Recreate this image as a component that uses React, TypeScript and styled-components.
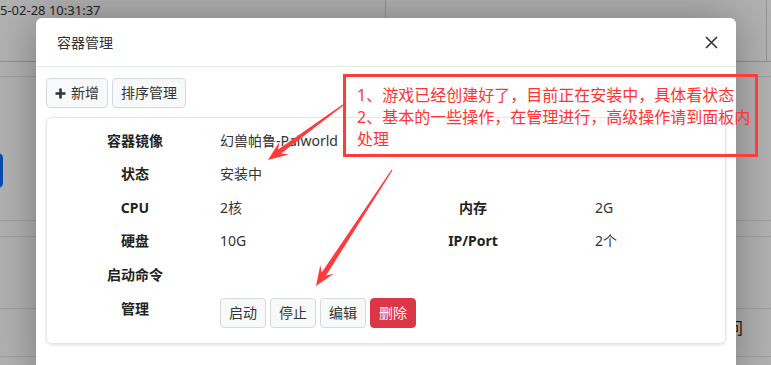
import React from 'react';
import styled, { createGlobalStyle } from 'styled-components';

const GlobalStyle = createGlobalStyle`
  html, body {
    margin: 0;
    padding: 0;
    background: #fff;
  }
  body {
    font-family: "Noto Sans", "Noto Sans CJK SC", sans-serif;
  }
`;

const Screen = styled.div`
  position: relative;
  width: 771px;
  height: 365px;
  overflow: hidden;
  background: #fff;
`;

/* page behind the dialog */

const PageTop = styled.div`
  display: flex;
  height: 62px;
  box-sizing: border-box;
  border-bottom: 1px solid #cfcfcf;
`;

const TopCell = styled.div<{ $w: number }>`
  width: ${p => p.$w}px;
  box-sizing: border-box;
  border-right: 1px solid #d4d4d4;
  white-space: nowrap;
  font-size: 13px;
  line-height: 20px;
  color: #333;
`;

const Band = styled.div<{ $h: number; $line: string }>`
  height: ${p => p.$h}px;
  box-sizing: border-box;
  border-bottom: 1px solid ${p => p.$line};
  overflow: hidden;
`;

const BlueBtn = styled.div`
  width: 63px;
  height: 35px;
  margin: 76px 0 0 -60px;
  border-radius: 5px;
  background: #0d6efd;
`;

const EdgeGlyph = styled.div`
  padding: 6px 0 0 727px;
  font-size: 16px;
  color: #222;
`;

const Backdrop = styled.div`
  position: absolute;
  inset: 0;
  background: rgba(0, 0, 0, 0.3);
`;

/* dialog */

const Modal = styled.div`
  position: absolute;
  left: 36px;
  top: 18px;
  width: 700px;
  background: #fff;
  border-radius: 6px 6px 0 0;
  box-shadow: 0 0 45px rgba(0, 0, 0, 0.32);
  color: #212529;
`;

const Header = styled.div`
  display: flex;
  align-items: center;
  justify-content: space-between;
  height: 49px;
  box-sizing: border-box;
  padding: 0 18px 0 21px;
  border-bottom: 1px solid #e9ecef;
`;

const Title = styled.div`
  font-size: 14px;
  color: #333;
`;

const Body = styled.div`
  padding: 11px 10px 40px;
`;

const Toolbar = styled.div`
  display: flex;
  gap: 4px;
`;

const Btn = styled.button<{ $danger?: boolean }>`
  display: inline-flex;
  align-items: center;
  gap: 5px;
  height: 30px;
  padding: 0 8px;
  border-radius: 4px;
  border: 1px solid ${p => (p.$danger ? '#dc3545' : '#d6d9dc')};
  background: ${p => (p.$danger ? '#dc3545' : '#f8f9fa')};
  color: ${p => (p.$danger ? '#fff' : '#333')};
  font-family: inherit;
  font-size: 14px;
  line-height: 1;
  cursor: pointer;
`;

const Card = styled.div`
  margin-top: 9px;
  padding: 6px 0 15px 10px;
  border: 1px solid #e6e6e6;
  border-radius: 6px;
  box-shadow: 0 1px 3px rgba(0, 0, 0, 0.12);
`;

const Row = styled.div<{ $top?: boolean }>`
  display: grid;
  grid-template-columns: 156px 145px 230px 1fr;
  align-items: ${p => (p.$top ? 'start' : 'center')};
  height: ${p => (p.$top ? 'auto' : '33.5px')};
  padding-top: ${p => (p.$top ? '6.5px' : '0')};
  line-height: 20px;
  font-size: 14px;
`;

const Label = styled.div<{ $top?: boolean }>`
  text-align: center;
  font-weight: 700;
  color: #222;
  padding-top: ${p => (p.$top ? '1px' : '0')};
`;

const Value = styled.div<{ $span?: boolean }>`
  padding-left: 7px;
  color: #333;
  white-space: nowrap;
  ${p => (p.$span ? 'grid-column: 2 / -1;' : '')}
`;

const Actions = styled.div`
  grid-column: 2 / -1;
  display: flex;
  gap: 4px;
  padding-left: 7px;
`;

/* screenshot annotation */

const Note = styled.div`
  position: absolute;
  left: 343px;
  top: 74px;
  width: 415px;
  height: 83px;
  box-sizing: border-box;
  border: 3px solid #ff3b3b;
  padding: 7px 0 0 11px;
  color: #ff3333;
  font-size: 16px;
  line-height: 22px;
`;

const ArrowLayer = styled.svg`
  position: absolute;
  left: 0;
  top: 0;
  pointer-events: none;
`;

const PlusIcon = () => (
  <svg width="11" height="11" viewBox="0 0 11 11">
    <path d="M5.5 0.5v10M0.5 5.5h10" stroke="#333" strokeWidth="2.6" />
  </svg>
);

const CloseIcon = () => (
  <svg width="13" height="13" viewBox="0 0 13 13">
    <path d="M1 1l11 11M12 1L1 12" stroke="#333" strokeWidth="1.6" />
  </svg>
);

const arrowPoints = (tx: number, ty: number, px: number, py: number) => {
  const len = Math.hypot(px - tx, py - ty);
  const ux = (px - tx) / len;
  const uy = (py - ty) / len;
  const nx = -uy;
  const ny = ux;
  const head = 20;
  const wing = 8;
  const neck = 2.6;
  const tail = 0.6;
  const bx = px - ux * head;
  const by = py - uy * head;
  const kx = px - ux * head * 0.72;
  const ky = py - uy * head * 0.72;
  return [
    [tx + nx * tail, ty + ny * tail],
    [kx + nx * neck, ky + ny * neck],
    [bx + nx * wing, by + ny * wing],
    [px, py],
    [bx - nx * wing, by - ny * wing],
    [kx - nx * neck, ky - ny * neck],
    [tx - nx * tail, ty - ny * tail],
  ]
    .map(([x, y]) => `${x.toFixed(1)},${y.toFixed(1)}`)
    .join(' ');
};

const info = [
  { label: 'CPU', value: '2核', label2: '内存', value2: '2G' },
  { label: '硬盘', value: '10G', label2: 'IP/Port', value2: '2个' },
];

export default function App() {
  return (
    <Screen>
      <GlobalStyle />

      <PageTop>
        <TopCell $w={386}>5-02-28 10:31:37</TopCell>
        <TopCell $w={381} />
      </PageTop>
      <Band $h={15} $line="#e2e2e2" />
      <Band $h={144} $line="#e2e2e2">
        <BlueBtn />
      </Band>
      <Band $h={16} $line="#e2e2e2" />
      <Band $h={72} $line="#e2e2e2" />
      <Band $h={48} $line="#e2e2e2">
        <EdgeGlyph>问</EdgeGlyph>
      </Band>

      <Backdrop />

      <Modal>
        <Header>
          <Title>容器管理</Title>
          <CloseIcon />
        </Header>
        <Body>
          <Toolbar>
            <Btn>
              <PlusIcon />
              新增
            </Btn>
            <Btn>排序管理</Btn>
          </Toolbar>
          <Card>
            <Row>
              <Label>容器镜像</Label>
              <Value $span>幻兽帕鲁-Palworld</Value>
            </Row>
            <Row>
              <Label>状态</Label>
              <Value $span>安装中</Value>
            </Row>
            {info.map(r => (
              <Row key={r.label}>
                <Label>{r.label}</Label>
                <Value>{r.value}</Value>
                <Label>{r.label2}</Label>
                <Value>{r.value2}</Value>
              </Row>
            ))}
            <Row>
              <Label>启动命令</Label>
              <Value $span />
            </Row>
            <Row $top>
              <Label $top>管理</Label>
              <Actions>
                <Btn>启动</Btn>
                <Btn>停止</Btn>
                <Btn>编辑</Btn>
                <Btn $danger>删除</Btn>
              </Actions>
            </Row>
          </Card>
        </Body>
      </Modal>

      <Note>
        <div>1、游戏已经创建好了，目前正在安装中，具体看状态</div>
        <div>2、基本的一些操作，在管理进行，高级操作请到面板内处理</div>
      </Note>

      <ArrowLayer width="771" height="365" viewBox="0 0 771 365">
        <polygon points={arrowPoints(343, 105, 268, 160)} fill="#ff3b3b" />
        <polygon points={arrowPoints(392, 170, 316, 286)} fill="#ff3b3b" />
      </ArrowLayer>
    </Screen>
  );
}
